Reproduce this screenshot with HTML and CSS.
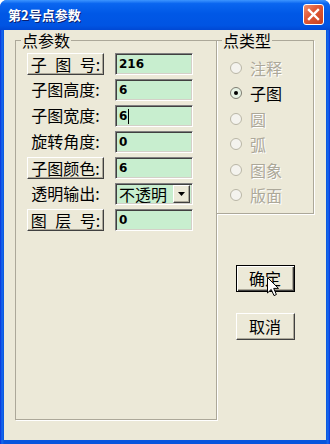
FILE: index.html
```html
<!DOCTYPE html>
<html lang="zh-CN">
<head>
  <meta charset="UTF-8">
  <meta name="viewport" content="width=device-width, initial-scale=1.0">
  <title>第2号点参数</title>
  <link rel="stylesheet" href="styles.css">
</head>
<body>
  <div class="window">
    <div class="titlebar">
      <span class="title">第2号点参数</span>
      <span class="close">
        <svg width="13" height="13" viewBox="0 0 13 13">
          <path d="M2 2 L11 11 M11 2 L2 11" stroke="#fff" stroke-width="2.4" stroke-linecap="square"/>
        </svg>
      </span>
    </div>

    <div class="client">
      <fieldset class="group params">
        <legend>点参数</legend>
        <div class="row">
          <span class="cap cap-btn">子 图 号:</span>
          <span class="field">216</span>
        </div>
        <div class="row">
          <span class="cap">子图高度:</span>
          <span class="field">6</span>
        </div>
        <div class="row">
          <span class="cap">子图宽度:</span>
          <span class="field">6<span class="caret"></span></span>
        </div>
        <div class="row">
          <span class="cap">旋转角度:</span>
          <span class="field">0</span>
        </div>
        <div class="row">
          <span class="cap cap-btn">子图颜色:</span>
          <span class="field">6</span>
        </div>
        <div class="row">
          <span class="cap">透明输出:</span>
          <span class="field combo">
            <span class="combo-text">不透明</span>
            <span class="combo-arrow">
              <svg width="7" height="4" viewBox="0 0 7 4"><path d="M0 0 H7 L3.5 4 Z" fill="#000"/></svg>
            </span>
          </span>
        </div>
        <div class="row">
          <span class="cap cap-btn">图 层 号:</span>
          <span class="field">0</span>
        </div>
      </fieldset>

      <div class="side">
        <fieldset class="group kinds">
          <legend>点类型</legend>
          <div class="radio disabled"><span class="dot"></span>注释</div>
          <div class="radio checked"><span class="dot"></span>子图</div>
          <div class="radio disabled"><span class="dot"></span>圆</div>
          <div class="radio disabled"><span class="dot"></span>弧</div>
          <div class="radio disabled"><span class="dot"></span>图象</div>
          <div class="radio disabled"><span class="dot"></span>版面</div>
        </fieldset>

        <div class="actions">
          <span class="btn btn-default">确定
            <svg class="cursor" width="13" height="20" viewBox="0 0 13 20">
              <path d="M0.5 0.5 L0.5 16 L4.2 12.4 L7 18.6 L9.4 17.5 L6.7 11.4 L11.5 11.4 Z" fill="#fff" stroke="#000" stroke-width="1"/>
            </svg>
          </span>
          <span class="btn">取消</span>
        </div>
      </div>
    </div>
  </div>
</body>
</html>
```

FILE: styles.css
```css
* {
  box-sizing: border-box;
}

body {
  margin: 0;
  background: #ffffff;
  font-family: "Noto Sans CJK SC", "Noto Sans", sans-serif;
}

.window {
  width: 330px;
  height: 444px;
  display: flex;
  flex-direction: column;
  background: linear-gradient(to right, #0831d9 0, #166aee 2px, #0855dd 4px, #0855dd 326px, #166aee 328px, #0831d9 330px);
  border-radius: 7px 7px 0 0;
  overflow: hidden;
}

.titlebar {
  height: 30px;
  flex: none;
  display: flex;
  align-items: center;
  justify-content: space-between;
  padding: 0 6px 1px 8px;
  background: linear-gradient(to bottom, #3d95ff 0, #0a66f0 12%, #0058e6 45%, #0054e3 85%, #0048d4 100%);
}

.title {
  color: #ffffff;
  font-size: 13px;
  font-weight: bold;
  text-shadow: 1px 1px 0 #0a1e6e;
}

.close {
  width: 21px;
  height: 21px;
  border: 1px solid #ffffff;
  border-radius: 3px;
  background: linear-gradient(135deg, #f09070 0, #e05a38 40%, #c8401e 100%);
  display: flex;
  align-items: center;
  justify-content: center;
}

.client {
  flex: 1;
  margin: 0 4px 4px;
  padding: 2px 0 20px 11px;
  background: #ece9d8;
  display: flex;
}

.group {
  margin: 0;
  border: 1px solid #aca899;
  box-shadow: 1px 1px 0 #ffffff;
}

.group legend {
  font-size: 16px;
  line-height: 16px;
  padding: 0 1px;
  color: #000000;
}

.params {
  width: 202px;
  padding: 5px 0 0 11px;
  display: flex;
  flex-direction: column;
  gap: 4px;
}

.params legend {
  margin-left: -6px;
}

.row {
  display: flex;
  align-items: center;
  gap: 11px;
  height: 22px;
}

.cap {
  width: 77px;
  height: 22px;
  font-size: 16px;
  line-height: 20px;
  text-align: center;
  word-spacing: 5px;
  color: #000000;
}

.cap-btn {
  border: 1px solid;
  border-color: #ffffff #404040 #404040 #ffffff;
  box-shadow: inset -1px -1px 0 #aca899;
}

.field {
  width: 78px;
  height: 22px;
  padding-left: 3px;
  background: #c8eecf;
  border: 1px solid;
  border-color: #808080 #ffffff #ffffff #808080;
  box-shadow: inset 1px 1px 0 #404040, inset -1px -1px 0 #d4d0c8;
  font-family: "DejaVu Sans", sans-serif;
  font-size: 12px;
  font-weight: bold;
  line-height: 20px;
  color: #000000;
  display: flex;
  align-items: center;
}

.caret {
  width: 1px;
  height: 15px;
  margin-left: 1px;
  background: #000000;
}

.combo {
  justify-content: space-between;
  padding-right: 2px;
}

.combo-text {
  font-family: "Noto Sans CJK SC", sans-serif;
  font-size: 16px;
  font-weight: normal;
}

.combo-arrow {
  width: 17px;
  height: 18px;
  background: #ece9d8;
  border: 1px solid;
  border-color: #ffffff #404040 #404040 #ffffff;
  box-shadow: inset -1px -1px 0 #aca899;
  display: flex;
  align-items: center;
  justify-content: center;
}

.side {
  width: 98px;
  margin-left: -1px;
  display: flex;
  flex-direction: column;
}

.kinds {
  padding: 7px 0 5px 13px;
}

.kinds legend {
  margin-left: -8px;
}

.radio {
  height: 25.5px;
  display: flex;
  align-items: center;
  gap: 8px;
  font-size: 16px;
  color: #000000;
}

.radio.disabled {
  color: #aca899;
  text-shadow: 1px 1px 0 #ffffff;
}

.dot {
  width: 12px;
  height: 12px;
  border-radius: 50%;
  border: 1px solid #b9b6a6;
  background: #f4f3ee;
  display: flex;
  align-items: center;
  justify-content: center;
}

.radio.checked .dot {
  border-color: #7f7d72;
  background: #e6f2e4;
}

.radio.checked .dot::after {
  content: "";
  width: 4px;
  height: 4px;
  border-radius: 50%;
  background: #000000;
}

.actions {
  margin-top: 51px;
  display: flex;
  flex-direction: column;
  align-items: center;
  gap: 21px;
}

.btn {
  position: relative;
  width: 59px;
  height: 27px;
  font-size: 16px;
  line-height: 25px;
  text-align: center;
  color: #000000;
  border: 1px solid;
  border-color: #ffffff #404040 #404040 #ffffff;
  box-shadow: inset -1px -1px 0 #aca899;
}

.btn-default {
  border: 1px solid #000000;
  box-shadow: inset 1px 1px 0 #ffffff, inset -1px -1px 0 #404040, inset -2px -2px 0 #aca899;
}

.cursor {
  position: absolute;
  left: 30px;
  top: 11px;
}
```
